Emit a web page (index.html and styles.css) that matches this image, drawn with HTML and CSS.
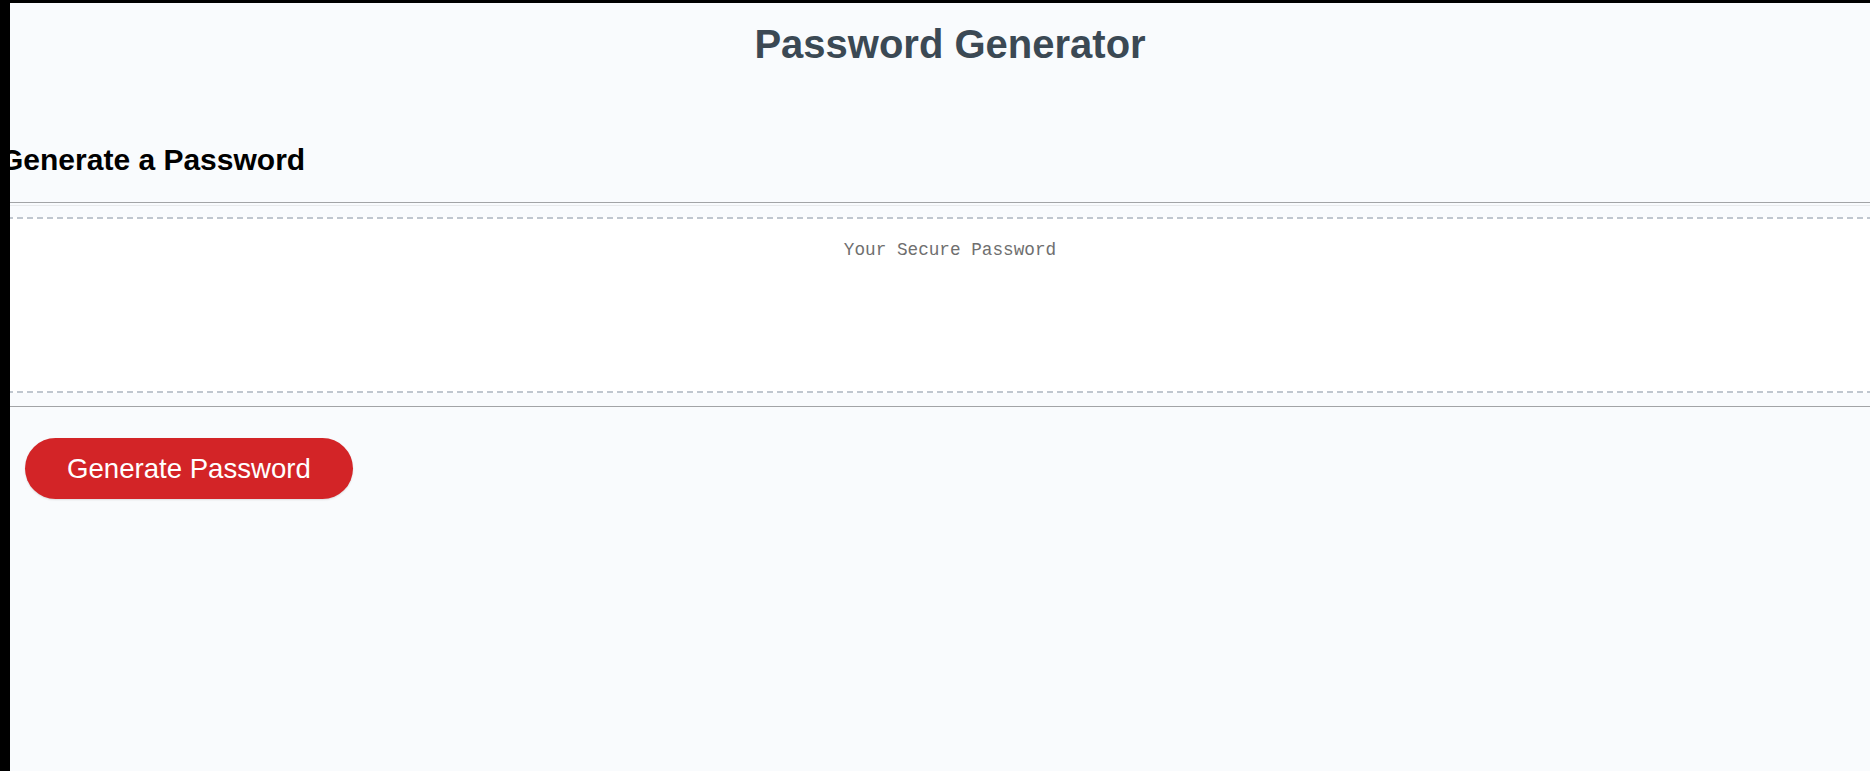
FILE: index.html
```html
<!DOCTYPE html>
<html lang="en">
<head>
<meta charset="utf-8">
<title>Password Generator</title>
<link rel="stylesheet" href="styles.css">
</head>
<body>
<div class="screen">
  <div class="page">
    <header class="site-header">
      <h1 class="title">Password Generator</h1>
    </header>
    <section class="card">
      <div class="card-header">
        <h2 class="card-title">Generate a Password</h2>
      </div>
      <div class="rule-dark"></div>
      <div class="rule-light"></div>
      <div class="card-body">
        <textarea class="password" readonly placeholder="Your Secure Password" aria-label="Generated Password"></textarea>
      </div>
      <div class="rule-dark rule-bottom"></div>
      <div class="card-footer">
        <button class="btn" type="button">Generate Password</button>
      </div>
    </section>
  </div>
</div>
</body>
</html>
```

FILE: styles.css
```css
* { box-sizing: border-box; }

html, body {
  margin: 0;
  padding: 0;
  height: 100%;
}

body {
  background: #000;
  padding: 3px 0 0 10px;
  font-family: "Liberation Sans", Arial, sans-serif;
  overflow: hidden;
}

.screen {
  background: #f9fbfd;
  height: 100%;
  overflow: hidden;
}

.page {
  width: 1906px;
  margin-left: -13px;
}

.site-header {
  text-align: center;
  padding-top: 18px;
}

.title {
  margin: 0;
  font-size: 40px;
  line-height: 46px;
  font-weight: bold;
  color: #3b4954;
}

.card-title {
  margin: 76px 0 0 3px;
  font-size: 30px;
  line-height: 34px;
  font-weight: bold;
  color: #000;
}

.rule-dark {
  height: 1px;
  background: #a2a4a6;
  margin-top: 25px;
}

.rule-light {
  height: 1px;
  background: #e8eaec;
  margin-top: 2px;
}

.card-body {
  margin-top: 11px;
}

.password {
  display: block;
  width: 100%;
  height: 176px;
  margin: 0;
  padding: 21px 15px 0;
  border: 2px dashed #c0c7cf;
  background: #fff;
  font-family: "Liberation Mono", "DejaVu Sans Mono", monospace;
  font-size: 17.7px;
  line-height: 20px;
  text-align: center;
  resize: none;
  overflow: hidden;
  outline: none;
  color: #333;
}

.password::placeholder {
  color: #6f6f6f;
  opacity: 1;
}

.rule-bottom {
  margin-top: 13px;
}

.card-footer {
  padding: 31px 0 0 28px;
}

.btn {
  border: none;
  background: #d32427;
  color: #fff;
  font-family: "Liberation Sans", Arial, sans-serif;
  font-size: 27.6px;
  line-height: 28px;
  padding: 17px 42px 16px;
  border-radius: 31px;
  cursor: pointer;
  box-shadow: 0 1px 2px rgba(0, 0, 0, 0.12);
}
```
